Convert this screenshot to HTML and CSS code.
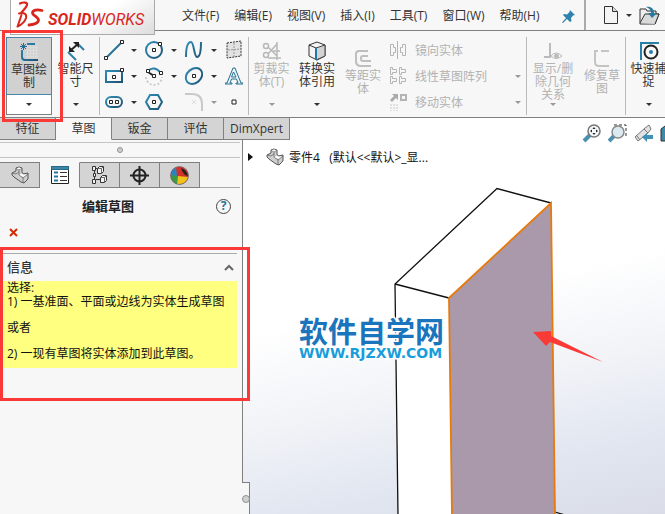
FILE: index.html
```html
<!DOCTYPE html>
<html lang="zh-CN">
<head>
<meta charset="utf-8">
<title>SOLIDWORKS</title>
<link rel="stylesheet" href="styles.css">
</head>
<body>
<svg class="defs" aria-hidden="true">
  <defs>
    <linearGradient id="steel" x1="0" y1="0" x2="1" y2="1"><stop offset="0" stop-color="#2f8db5"/><stop offset="1" stop-color="#1f5374"/></linearGradient>
    <symbol id="part" viewBox="0 0 18 18">
      <path d="M1 7 5 5V2L8 1l3 1v4l1 2 5-1v6l-4 4-3-1-7-5-2-2z" fill="#cfcfcf" stroke="#555" stroke-linejoin="round"/>
      <path d="M5 2l3 2 3-2M8 4v5l4 3M1 7l4 1 3-2M12 12v5M12 12l5-4" fill="none" stroke="#666" stroke-width=".8"/>
      <path d="M5.500 2.300 8 1.400l2.500.9L8 3.500zM8.500 9l2.500-1.500 2 1.200 3-.7-3.500 3z" fill="#fafafa"/>
    </symbol>
    <symbol id="node" viewBox="0 0 4 4"><path d="M.5.5h3v3h-3z" fill="#fff" stroke="#222"/></symbol>
  </defs>
</svg>

<header class="menubar">
  <div class="logo">
    <svg width="28" height="27" viewBox="0 0 28 27" fill="none" stroke="#d9261c" stroke-linecap="round" stroke-linejoin="round">
      <path d="M4 2.500c3-1.500 8-1.500 7 1.500-.6 2.500-3 4.500-5.500 7.500" stroke-width="2.200"/>
      <path d="M3 12.500c5-1.500 8 .5 7 4.500-1 3.500-4 6.500-8.500 8.500L5.500 14" stroke-width="2"/>
      <path d="M26 9.500c-5-1.200-9-.3-9.500 2-.5 3 6.500 4.500 6 8-.4 3-5 4-9.500 4.500" stroke-width="2.800"/>
    </svg>
    <span class="wordmark"><b>SOLID</b>WORKS</span>
  </div>
  <nav class="menus">
    <button>文件(F)</button><button>编辑(E)</button><button>视图(V)</button><button>插入(I)</button><button>工具(T)</button><button>窗口(W)</button><button>帮助(H)</button>
  </nav>
  <button class="pin" aria-label="固定菜单"><svg width="13" height="13" viewBox="0 0 13 13"><path d="M8 0l5 5-2 .5L9 8l.5 3L8 12 5 9l-4 4-1-.5L4 8 1 5l1-1 3 .5L7.500 2z" fill="#2f82ab"/></svg></button>
  <div class="quick">
    <button aria-label="新建"><svg width="16" height="19" viewBox="0 0 16 19"><path d="M1.500.5h8l5 5v12h-13z" fill="#f4f4f4" stroke="#333"/><path d="M9.500.5v5h5" fill="#ddd" stroke="#333"/></svg></button>
    <button class="drop" aria-label="新建选项"></button>
    <button aria-label="打开"><svg width="21" height="19" viewBox="0 0 21 19"><path d="M1 17V3h6l1 2h9v3l3 0-4 10H1z" fill="#eee" stroke="#333"/><path d="M1 17 6 8h14l-4 10" fill="#dadada" stroke="#333"/><path d="M7 1c5-1 8 2 8 6h3l-5 5-4-5h3c0-3-2-5-5-6z" fill="#2c7b9d"/></svg></button>
  </div>
</header>

<section class="ribbon" aria-label="草图工具">
  <div class="split">
    <button class="tool sketch">
      <svg width="20" height="20" viewBox="0 0 20 20"><path d="M7 5.500h12M7 8.500h12M7 11.500h12M7 14.500h12M8.500 3v14M11.500 3v14M14.500 3v14M17.500 3v14" stroke="#dcdcdc"/><path d="M8 2h8M3 8v7q0 3 3 3h13" fill="none" stroke="url(#steel)" stroke-width="2"/><path d="M4.500 1v7M1 4.500h7M2 2l5 5M7 2 2 7" stroke="#256f94"/></svg>
      <span>草图绘制</span>
    </button>
    <button class="drop foot" aria-label="草图绘制选项"></button>
    <i class="mark mark-tool"></i>
  </div>
  <div class="tool dim">
    <svg width="18" height="20" viewBox="0 0 18 20"><path d="M10 2l7 7M1 11l8 8" stroke="#2e81a6" stroke-width="2"/><path d="M4 9l7-6" stroke="#222" stroke-width="2"/><path d="M2 11V5l6 6zM12 1H6l6 6z" fill="#222"/></svg>
    <span>智能尺寸</span><button class="drop" aria-label="智能尺寸选项"></button>
  </div>
  <div class="entities">
    <button aria-label="直线"><svg width="20" height="20" viewBox="0 0 20 20"><path d="M3 17 17 3" stroke="url(#steel)" stroke-width="2"/><use href="#node" x="0" y="16" width="4" height="4"/><use href="#node" x="16" y="0" width="4" height="4"/></svg></button><button class="drop" aria-label="直线选项"></button>
    <button aria-label="圆"><svg width="20" height="20" viewBox="0 0 20 20"><circle cx="10" cy="10" r="8" fill="none" stroke="url(#steel)" stroke-width="2"/><use href="#node" x="8" y="8" width="4" height="4"/><use href="#node" x="14" y="2" width="4" height="4"/></svg></button><button class="drop" aria-label="圆选项"></button>
    <button aria-label="样条曲线"><svg width="20" height="20" viewBox="0 0 20 20"><path d="M2 17C2 7 4 2 7 2s3 15 6 15 4-7 4-15" fill="none" stroke="url(#steel)" stroke-width="2"/></svg></button><button class="drop" aria-label="样条曲线选项"></button>
    <button aria-label="基准面"><svg width="18" height="20" viewBox="0 0 18 20"><path d="M2 3 16 1v15L2 18z" fill="#e2e2e2" stroke="#333" stroke-dasharray="2 1"/><path d="M9 3v14M3 10l12-1" stroke="#999" stroke-dasharray="2 1"/></svg></button>

    <button aria-label="矩形"><svg width="20" height="16" viewBox="0 0 20 16"><path d="M2 3h16v11H2z" fill="none" stroke="url(#steel)" stroke-width="2"/><use href="#node" x="8" y="7" width="4" height="4"/><use href="#node" x="16" y="0" width="4" height="4"/></svg></button><button class="drop" aria-label="矩形选项"></button>
    <button aria-label="圆弧"><svg width="20" height="20" viewBox="0 0 20 20"><path d="M4 5q6-6 13 2" fill="none" stroke="#2e81a6" stroke-width="2"/><path d="M2 11a8 8 0 0 0 16 0" fill="none" stroke="#ccc" stroke-width="2" stroke-dasharray="2 2"/><path d="M4 6l6 4" stroke="#222" stroke-width="2"/><use href="#node" x="2" y="3" width="4" height="4"/><use href="#node" x="15" y="5" width="4" height="4"/><use href="#node" x="8" y="8" width="4" height="4"/></svg></button><button class="drop" aria-label="圆弧选项"></button>
    <button aria-label="椭圆"><svg width="20" height="20" viewBox="0 0 20 20"><ellipse cx="10" cy="10" rx="9" ry="7" transform="rotate(-40 10 10)" fill="none" stroke="url(#steel)" stroke-width="2"/><use href="#node" x="8" y="8" width="4" height="4"/></svg></button><button class="drop" aria-label="椭圆选项"></button>
    <button aria-label="文字"><svg width="18" height="18" viewBox="0 0 18 18"><path d="M8 1h2l6 15h2v1h-7v-1h2l-1.500-4h-5L5 16h2v1H0v-1h2zM8.500 5 6.500 10H11z" fill="#e9f4f9" stroke="#296f91"/></svg></button>

    <button aria-label="槽口"><svg width="20" height="12" viewBox="0 0 20 12"><rect x="2" y="1" width="16" height="10" rx="5" fill="none" stroke="url(#steel)" stroke-width="2"/><use href="#node" x="5" y="4" width="4" height="4"/><use href="#node" x="11" y="4" width="4" height="4"/></svg></button><button class="drop" aria-label="槽口选项"></button>
    <button aria-label="多边形"><svg width="20" height="18" viewBox="0 0 20 18"><path d="M6 2h8l4 7-4 7H6L2 9z" fill="none" stroke="url(#steel)" stroke-width="2"/><use href="#node" x="8" y="7" width="4" height="4"/></svg></button><span></span>
    <button aria-label="圆角" disabled><svg width="20" height="20" viewBox="0 0 20 20"><path d="M1 2h7q10 0 10 10v7" fill="none" stroke="#c9c9c9" stroke-width="2"/><path d="M8 8l4 4M12 8l-4 4" stroke="#ddd"/></svg></button><button class="drop" aria-label="圆角选项" disabled></button>
    <button aria-label="点"><svg width="6" height="6" viewBox="0 0 6 6"><path d="M1 1h4v4H1z" fill="#fff" stroke="#222"/></svg></button>
  </div>
  <div class="tool off ruled">
    <svg width="20" height="20" viewBox="0 0 20 20" fill="none" stroke="#b8b8b8" stroke-width="1.500"><circle cx="4" cy="5" r="2.500"/><circle cx="4" cy="14" r="2.500"/><path d="M6 6l9 9M6 13l9-10M15 1v18M6 17h13M11 10h7"/></svg>
    <span>剪裁实体(T)</span><button class="drop" aria-label="剪裁选项" disabled></button>
  </div>
  <div class="tool">
    <svg width="18" height="20" viewBox="0 0 18 20"><path d="M1 4 9 1l8 3v11l-8 4-8-4z" fill="#f4f4f4" stroke="#333" stroke-linejoin="round"/><path d="M8 7 17 4v11l-9 4z" fill="#d3d3d3" stroke="#444"/><path d="M1 4l7 3" stroke="#333"/><path d="M8 7v12" stroke="#23789f" stroke-width="2"/></svg>
    <span>转换实体引用</span><button class="drop" aria-label="转换选项"></button>
  </div>
  <button class="tool off low" disabled>
    <svg width="18" height="19" viewBox="0 0 18 19"><path d="M14 2H5Q2 2 2 5v7q0 5 5 5h10M14 7H9Q7 7 7 9v1q0 2 2 2h8" fill="none" stroke="#bebebe" stroke-width="2"/></svg>
    <span>等距实体</span>
  </button>
  <div class="list">
    <button disabled><svg width="18" height="18" viewBox="0 0 18 18" fill="none" stroke="#b4b4b4"><path d="M8.500 0v18M1.500 3.500h3v3h2v5h-2v3h-3zM16.500 3.500h-3v3h-2v5h2v3h3z"/></svg>镜向实体</button><span></span>
    <button disabled><svg width="18" height="18" viewBox="0 0 18 18" fill="none" stroke="#b4b4b4"><path d="M1.500.5h2v2h4v3h-4v2h-2zM10.500.5h2v2h4v3h-4v2h-2zM1.500 9.500h2v2h4v3h-4v2h-2zM10.500 9.500h2v2h4v3h-4v2h-2z"/></svg>线性草图阵列</button><button class="drop" aria-label="阵列选项" disabled></button>
    <button disabled><svg width="18" height="18" viewBox="0 0 18 18"><path d="M1 7 5 3 3 1h6v6L7 5 3 9z" fill="#aaa"/><path d="M12 2h5v5h-5z" fill="none" stroke="#b4b4b4" stroke-width="2"/><path d="M1 12h8M1 15h8M1 18h8" stroke="#e0e0e0" stroke-width="2" stroke-dasharray="2 1"/></svg>移动实体</button><button class="drop" aria-label="移动选项" disabled></button>
  </div>
  <div class="tool off ruled wide">
    <svg width="20" height="20" viewBox="0 0 20 20" fill="none" stroke="#bbb"><path d="M7 2v14M1 16h7" stroke-width="2"/><path d="M8 15q5-6 11 0-6 5-11 0z"/><circle cx="13.500" cy="15" r="2" fill="#bbb"/></svg>
    <span>显示/删除几何关系</span><button class="drop" aria-label="几何关系选项" disabled></button>
  </div>
  <button class="tool off low" disabled>
    <svg width="18" height="19" viewBox="0 0 18 19"><path d="M16 2H8M5 2H2v11q0 4 4 4h10" fill="none" stroke="#c4c4c4" stroke-width="2"/></svg>
    <span>修复草图</span>
  </button>
  <div class="tool ruled">
    <svg width="20" height="20" viewBox="0 0 20 20" fill="none"><path d="M2 19V2h18" stroke="#2780a9" stroke-width="2"/><circle cx="12" cy="11" r="6.500" stroke="#222" stroke-width="2"/><circle cx="12" cy="11" r="2" fill="#2780a9"/></svg>
    <span>快速捕捉</span><button class="drop" aria-label="捕捉选项"></button>
  </div>
</section>

<main>
  <div class="side">
    <nav class="tabs"><button>特征</button><button class="on">草图</button><button>钣金</button><button>评估</button><button>DimXpert</button></nav>
    <aside class="panel">
      <div class="grip"><i></i></div>
      <div class="ptabs">
        <button aria-label="设计树"><svg width="18" height="18"><use href="#part"/></svg></button>
        <button class="on" aria-label="属性"><svg width="18" height="18" viewBox="0 0 18 18"><path d="M.5.5h17v17H.5z" fill="#fff" stroke="#222"/><path d="M0 0h18v4H0z" fill="#24688a"/><path d="M1 2h16" stroke="#57a3c3"/><path d="M3 6.500h4M3 10.500h4M3 14.500h4" stroke="#24789e" stroke-width="2"/><path d="M9 6.500h7M9 10.500h7M9 14.500h7" stroke="#333"/></svg></button>
        <button aria-label="配置"><svg width="16" height="18" viewBox="0 0 16 18" fill="#f2f2f2" stroke="#333"><path d="M2.500 4v10M4 2.500h3M4 13.500h4" fill="none"/><path d="M.5.5h3v4h-3zM.5 13.500h3v4h-3zM1.500 7.500h2v3h-2zM5.500 2.500l2-2h4v5l-2 2h-4zM8.500 11.500l2-2h4v5l-2 2h-4z"/><path d="M5.500 2.500h4v5M9.500 2.500l2-2M8.500 11.500h4v5M12.500 11.500l2-2" fill="none" stroke="#666"/></svg></button>
        <button aria-label="尺寸专家"><svg width="19" height="19" viewBox="0 0 19 19" fill="none" stroke="#222" stroke-width="2"><circle cx="9.500" cy="9.500" r="6"/><path d="M9.500 0v19M0 9.500h19"/></svg></button>
        <button aria-label="外观"><svg width="19" height="19" viewBox="0 0 19 19"><circle cx="9.500" cy="9.500" r="9" fill="#d33029"/><path d="M1 11Q0 4 6 1L7 10z" fill="#2b83c5"/><path d="M1 9l7 1-1 8Q1 16 1 9z" fill="#3b9a48"/><path d="M8 10l10 1q-2 8-11 7z" fill="#f2c21c"/><path d="M11 2q6 2 7 8-5-1-7-8z" fill="#222"/><circle cx="9.500" cy="9.500" r="9" fill="none" stroke="#666" stroke-width=".7"/></svg></button>
      </div>
      <div class="title"><h1>编辑草图</h1><button class="help" aria-label="帮助">?</button></div>
      <button class="close" aria-label="关闭"><svg width="9" height="9" viewBox="0 0 9 9"><path d="M1 1l7 7M8 1 1 8" stroke="#d42a05" stroke-width="2"/></svg></button>
      <section class="info">
        <div class="info-head"><h2>信息</h2><button aria-label="折叠"><svg width="10" height="7" viewBox="0 0 10 7"><path d="M1 6l4-4 4 4" fill="none" stroke="#666" stroke-width="2"/></svg></button></div>
        <div class="message"><p>选择:<br>1) 一基准面、平面或边线为实体生成草图</p><p>或者</p><p>2) 一现有草图将实体添加到此草图。</p></div>
        <i class="mark mark-info"></i>
      </section>
      <i class="handle"></i>
    </aside>
  </div>
  <section class="viewport">
    <svg class="model" viewBox="243 118 422 396" preserveAspectRatio="xMinYMin slice" role="img" aria-label="零件模型">
      <path d="M395 284 497 188.500 551 203 449 298 452 516H398z" fill="#fff"/>
      <path d="M449 298 551 203 555 516H452z" fill="#a999ab"/>
      <path d="M398 516 395 284 497 188.500 551 203M395 284l54 14M555 512l10 3" fill="none" stroke="#111" stroke-width="1.300"/>
      <path d="M452 516 449 298 551 203 555 516" fill="none" stroke="#e77a0b" stroke-width="1.800"/>
      <text class="brand" x="299" y="343">软件自学网</text>
      <text class="url" x="299" y="358">WWW.RJZXW.COM</text>
      <path d="M533 332 551 331V336L603 362 550 342 546 346z" fill="#fb3a37"/>
    </svg>
    <div class="hud">
      <button aria-label="整屏显示"><svg width="19" height="19" viewBox="0 0 19 19"><path d="M8 11 2 17" stroke="#4b90ae" stroke-width="4"/><circle cx="12" cy="7" r="6" fill="#f4f8fa" stroke="#777" stroke-width="1.500"/><path d="M12 3l1.500 2h-3zM12 11l1.500-2h-3zM8 7l2-1.500v3zM16 7l-2-1.500v3z" fill="#222"/></svg></button>
      <button aria-label="局部放大"><svg width="19" height="19" viewBox="0 0 19 19"><path d="M6 1h12v12" fill="none" stroke="#333" stroke-dasharray="3 2"/><path d="M6 12 1 17" stroke="#4b90ae" stroke-width="4"/><circle cx="10" cy="8" r="6" fill="#dbe9f0" stroke="#888" stroke-width="1.500"/></svg></button>
      <button aria-label="上一视图"><svg width="19" height="19" viewBox="0 0 19 19"><path d="M1 13 11 4l4-3 2 4-3 4L4 17z" fill="#e2e2e2" stroke="#777"/><path d="M3 12l3 4M10 5l4 4" stroke="#777"/><path d="M8 13l5-4v2h6v4h-6v3z" fill="#3f91b7"/></svg></button>
      <button aria-label="剖面视图"><svg width="19" height="19" viewBox="0 0 19 19"><path d="M1 5 5 2h12v15H1z" fill="#3c89a9" stroke="#333"/></svg></button>
    </div>
    <button class="tree"><i></i><svg width="18" height="18"><use href="#part"/></svg><span>零件4 &nbsp; (默认&lt;&lt;默认&gt;_显...</span></button>
  </section>
</main>
</body>
</html>
```
FILE: styles.css
```css
* { box-sizing: border-box; }

body {
  margin: 0;
  height: 100vh;
  display: flex;
  flex-direction: column;
  overflow: hidden;
  background: #f7f7f7;
  color: #333;
  font: 12px/13px "Open Sans", "Noto Sans CJK SC", sans-serif;
}

button {
  margin: 0;
  padding: 0;
  border: 0;
  background: none;
  color: inherit;
  font: inherit;
  white-space: nowrap;
}

svg { display: block; flex: none; }
h1, h2, p { margin: 0; }
.defs { position: absolute; width: 0; height: 0; }

.drop {
  display: grid;
  place-items: center;
  color: #333;
}
.drop::before {
  content: "";
  border: 3px solid transparent;
  border-top-color: currentColor;
  border-bottom: 0;
}
.drop:disabled { color: #999; }

.mark {
  position: absolute;
  z-index: 5;
  border: 3px solid #fb3a37;
  pointer-events: none;
}

/* Menu bar */
.menubar {
  flex: none;
  display: flex;
  height: 31px;
  padding-left: 10px;
  border-bottom: 1px solid #808080;
}
.logo {
  flex: none;
  position: relative;
  z-index: 1;
  display: flex;
  align-items: center;
  gap: 4px;
  width: 145px;
  height: 35px;
  padding: 0 0 5px 5px;
  border: 1px solid #aaa;
  border-top: 0;
  background: linear-gradient(150deg, #fff 55%, #ddd);
}
.wordmark {
  padding-top: 10px;
  color: #d9261c;
  font: italic 16px/18px Roboto, sans-serif;
}
.menus {
  display: flex;
  gap: 15px;
  padding-left: 27px;
}
.pin { margin-left: 22px; padding-top: 2px; }
.quick {
  flex: 1;
  display: flex;
  align-items: center;
  gap: 7px;
  margin-left: 9px;
  padding-left: 17px;
  border-left: 2px solid #aaa;
}

/* Ribbon */
.ribbon {
  flex: none;
  display: flex;
  height: 87px;
  padding: 6px 0 2px 6px;
  border-bottom: 1px solid #808080;
}
.split {
  flex: none;
  position: relative;
  width: 46px;
  display: flex;
  flex-direction: column;
}
.mark-tool { inset: -7px -11px -7px -4px; }
.tool {
  flex: none;
  width: 46px;
  display: flex;
  flex-direction: column;
  align-items: center;
  gap: 1px;
  padding-top: 4px;
  text-align: center;
}
.tool span {
  width: 36px;
  white-space: normal;
  word-break: break-all;
}
.tool .drop { margin: auto 0 9px; width: 20px; }
.sketch {
  flex: 1;
  border: 1px solid #4a86a8;
  background: #d1d1d1;
}
.foot {
  height: 20px;
  border: 1px solid #808080;
  border-top: 0;
  background: #fff;
}
.dim { width: 47px; }
.off { color: #b2b2b2; }
.low { padding-top: 12px; }
.wide { width: 53px; }
.wide span { width: 42px; }
.ruled { border-left: 1px solid #bbb; }

.entities {
  flex: none;
  display: grid;
  grid-template-columns: repeat(7, 20px);
  grid-template-rows: repeat(3, 26px);
  place-items: center;
  padding: 0 4px;
  border-left: 1px solid #bbb;
}
.list {
  flex: none;
  display: grid;
  grid-template-columns: 1fr 16px;
  grid-template-rows: repeat(3, 26px);
  align-items: center;
  width: 140px;
  padding-left: 3px;
  color: #b2b2b2;
}
.list button:not(.drop) {
  display: flex;
  align-items: center;
  gap: 8px;
}

/* Work area */
main { flex: 1; display: flex; min-height: 0; }
.side {
  flex: none;
  position: relative;
  z-index: 1;
  width: 243px;
  display: flex;
  flex-direction: column;
}
.tabs { display: flex; width: max-content; }
.tabs button {
  width: 56px;
  height: 22px;
  border: 1px solid #808080;
  border-width: 0 1px 1px 0;
  background: #d4d4d4;
}
.tabs .on { background: #f7f7f7; border-bottom-color: #f7f7f7; }
.tabs button:last-child { width: 66px; }

.panel {
  flex: 1;
  position: relative;
  border-right: 1px solid #808080;
  background: #f7f7f7;
}
.grip {
  height: 16px;
  margin: 2px 2px 4px 0;
  border: 1px solid #c4c4c4;
  border-width: 1px 0;
  display: grid;
  place-items: center;
}
.grip i, .handle::before {
  content: "";
  width: 6px;
  height: 6px;
  border: 1px solid #909090;
  border-radius: 50%;
  background: #d0d0d0;
}
.ptabs {
  display: flex;
  height: 26px;
  margin-right: 2px;
  border-bottom: 1px solid #aaa;
}
.ptabs button {
  width: 40px;
  height: 26px;
  display: grid;
  place-items: center;
  border: 1px solid #808080;
  border-left: 0;
  background: #d4d4d4;
}
.ptabs .on { border-top-color: #f7f7f7; border-bottom-color: #f7f7f7; background: #f7f7f7; }

.title {
  display: flex;
  align-items: center;
  height: 36px;
  padding-right: 11px;
}
h1 {
  flex: 1;
  text-align: center;
  font-size: 13px;
  color: #222;
}
.help {
  width: 15px;
  height: 15px;
  border: 1px solid #444;
  border-radius: 50%;
  color: #22759b;
  font-weight: 700;
  line-height: 12px;
}
.close { display: block; margin: 4px 0 0 9px; }
.info {
  position: relative;
  margin-top: 10px;
  padding: 6px 5px 33px 3px;
}
.mark-info { inset: 0 -8px 0 0; }
.info-head {
  display: flex;
  align-items: center;
  justify-content: space-between;
  height: 28px;
  padding: 0 3px 0 4px;
  border-top: 1px solid #aaa;
}
h2 { font-size: 13px; font-weight: 500; }
.message {
  display: flex;
  flex-direction: column;
  gap: 12px;
  padding: 0 4px 7px;
  background: #ffff80;
  color: #111;
  line-height: 14px;
}
.handle {
  position: absolute;
  right: -8px;
  bottom: 0;
  width: 8px;
  height: 32px;
  display: grid;
  place-items: center;
  border: 1px solid #808080;
  border-width: 1px 1px 0 0;
  background: #f7f7f7;
}

.viewport {
  flex: 1;
  position: relative;
  min-width: 0;
  overflow: hidden;
  display: flex;
  flex-direction: column;
  background: linear-gradient(168deg, #fff 45%, #f1f3f7 65%, #e0e5f0 85%, #dadde8);
}
.model { position: absolute; inset: 0; width: 100%; height: 100%; }
.model text { paint-order: stroke; stroke: #fff; stroke-width: 3px; }
.brand { font: 700 29px "Noto Sans CJK SC", sans-serif; fill: #1b75bc; }
.url { font: 700 14px "DejaVu Sans", sans-serif; fill: #1a9ddb; }
.hud {
  position: relative;
  align-self: flex-end;
  display: flex;
  gap: 7px;
  height: 30px;
  padding-top: 6px;
  margin-right: -14px;
}
.hud button, .tree { align-self: flex-start; }
.tree {
  position: relative;
  display: flex;
  align-items: center;
  gap: 5px;
  padding-left: 5px;
  color: #111;
}
.tree i {
  margin-right: 8px;
  border: 4px solid transparent;
  border-left: 5px solid #111;
  border-right: 0;
}
```
